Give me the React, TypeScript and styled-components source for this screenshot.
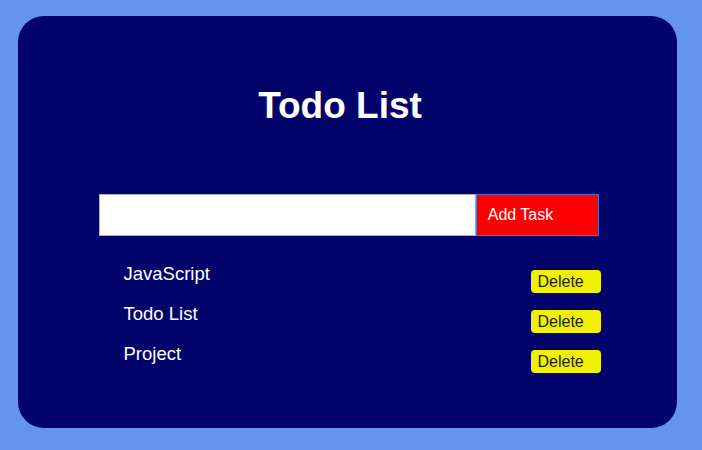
import React, { useState } from "react";
import styled, { createGlobalStyle } from "styled-components";

const Global = createGlobalStyle`
  html, body { margin: 0; padding: 0; }
  body {
    background: #6495ed;
    font-family: "Liberation Sans", Arial, sans-serif;
    width: 702px;
    height: 450px;
    overflow: hidden;
  }
`;

const Page = styled.div`
  padding: 16px 0 0 18px;
`;

const Card = styled.div`
  width: 659px;
  height: 412px;
  box-sizing: border-box;
  background: #03046b;
  border-radius: 26px;
  padding-top: 70px;
  display: flex;
  flex-direction: column;
  align-items: center;
`;

const Title = styled.h1`
  margin: 0 0 0 -15px;
  color: #ffffff;
  font-size: 37px;
  font-weight: 700;
  line-height: 40px;
`;

const Form = styled.div`
  display: flex;
  margin-top: 68px;
  width: 500px;
  margin-left: 2px;
`;

const Input = styled.input`
  box-sizing: border-box;
  width: 378px;
  height: 42px;
  border: 1px solid #b0b0b0;
  background: #fff;
  padding: 0 8px;
  font-size: 16px;
  font-family: inherit;
  outline: none;
`;

const AddButton = styled.button`
  box-sizing: border-box;
  width: 123px;
  height: 42px;
  background: #ff0000;
  color: #ffffff;
  border: 1px solid #4f73c9;
  font-family: inherit;
  font-size: 16px;
  text-align: left;
  padding: 0 0 0 11px;
`;

const List = styled.ul`
  list-style: none;
  margin: 28px 0 0 0;
  padding: 0;
  width: 477px;
  margin-left: 29px;
`;

const Item = styled.li`
  display: flex;
  justify-content: space-between;
  align-items: flex-start;
  height: 40px;
`;

const ItemText = styled.span`
  color: #ffffff;
  font-size: 18.5px;
  line-height: 38px;
  margin-top: -9px;
`;

const DeleteButton = styled.button`
  box-sizing: border-box;
  width: 70px;
  height: 23px;
  margin-top: 6px;
  background: #f2f200;
  color: #222;
  border: none;
  border-radius: 4px;
  font-family: inherit;
  font-size: 16px;
  padding: 0 0 0 7px;
  text-align: left;
`;

export default function App() {
  const [tasks] = useState(["JavaScript", "Todo List", "Project"]);
  return (
    <Page>
      <Global />
      <Card>
        <Title>Todo List</Title>
        <Form>
          <Input type="text" />
          <AddButton>Add Task</AddButton>
        </Form>
        <List>
          {tasks.map((t) => (
            <Item key={t}>
              <ItemText>{t}</ItemText>
              <DeleteButton>Delete</DeleteButton>
            </Item>
          ))}
        </List>
      </Card>
    </Page>
  );
}
